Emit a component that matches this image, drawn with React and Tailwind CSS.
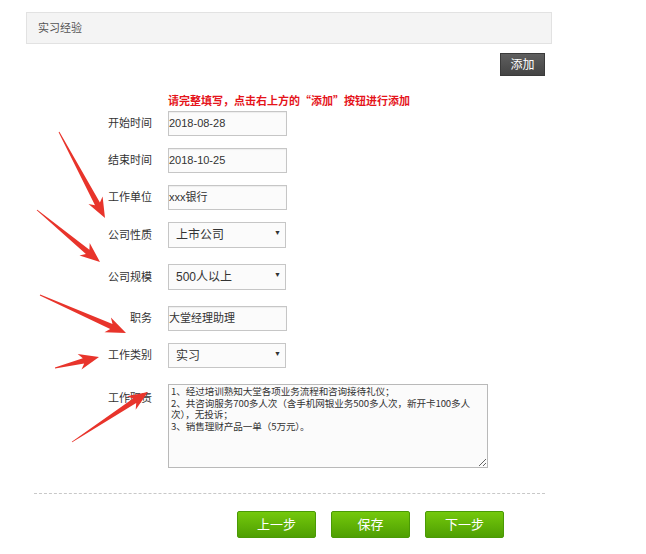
import React from 'react';

const arrows = [
  [59, 132, 105, 218],
  [37, 210, 100, 262],
  [40, 295, 126, 333],
  [55, 368, 99, 357],
  [72, 442, 148, 392],
];

function arrowPoints([x1, y1, x2, y2]) {
  const dx = x2 - x1, dy = y2 - y1;
  const L = Math.hypot(dx, dy);
  const ux = dx / L, uy = dy / L;
  const px = -uy, py = ux;
  const head = 20, barb = 8, shaft = 2.8, tail = 0.4;
  const at = (d, w) => [x1 + ux * d + px * w, y1 + uy * d + py * w];
  const pts = [
    at(0, tail),
    at(L - head + 4, shaft),
    at(L - head, barb),
    [x2, y2],
    at(L - head, -barb),
    at(L - head + 4, -shaft),
    at(0, -tail),
  ];
  return pts.map((p) => p.map((v) => v.toFixed(1)).join(',')).join(' ');
}

function Row({ label, children, className = '' }) {
  return (
    <div className={`flex items-center ${className}`}>
      <div className="w-[152px] text-right text-[11px] text-[#333]">{label}</div>
      <div className="ml-[16px]">{children}</div>
    </div>
  );
}

function TextInput({ value }) {
  return (
    <div className="w-[119px] h-[25px] border border-[#c6c6c6] bg-[#fbfbfb] flex items-center text-[11px] text-[#333] shadow-[inset_0_1px_1px_rgba(0,0,0,0.06)]">
      {value}
    </div>
  );
}

function Select({ value, h = 'h-[26px]' }) {
  return (
    <div className={`w-[118px] ${h} border border-[#c6c6c6] bg-[#fbfbfb] pl-[7px] pr-[4px] flex items-center justify-between text-[12px] text-[#333]`}>
      <span>{value}</span>
      <span className="text-[7px] text-[#333] -mt-[3px]">▼</span>
    </div>
  );
}

const duty = `1、经过培训熟知大堂各项业务流程和咨询接待礼仪；
2、共咨询服务700多人次（含手机网银业务500多人次，新开卡100多人
次），无投诉；
3、销售理财产品一单（5万元）。`;

export default function App() {
  return (
    <div className="relative w-[646px] h-[554px] bg-white overflow-hidden font-['Liberation_Sans','Noto_Sans_CJK_SC',sans-serif]">
      <div className="ml-[26px] mt-[12px] w-[526px] h-[32px] bg-[#f4f4f4] border border-[#e2e2e2] flex items-center pl-[11px] text-[11px] text-[#555]">
        实习经验
      </div>

      <div className="w-[545px] flex justify-end mt-[9px]">
        <button className="w-[45px] h-[23px] bg-gradient-to-b from-[#5f5f5f] to-[#444] border border-[#3a3a3a] text-white text-[12px] leading-none">
          添加
        </button>
      </div>

      <div className="pl-[168px] mt-[16px] text-[11px] leading-[16px] font-bold text-[#e5141b] font-['Noto_Sans_CJK_SC',sans-serif]">
        请完整填写，点击右上方的“添加”按钮进行添加
      </div>

      <div className="mt-[3px] flex flex-col">
        <Row label="开始时间"><TextInput value="2018-08-28" /></Row>
        <Row label="结束时间" className="mt-[12px]"><TextInput value="2018-10-25" /></Row>
        <Row label="工作单位" className="mt-[12px]"><TextInput value="xxx银行" /></Row>
        <Row label="公司性质" className="mt-[12px]"><Select value="上市公司" /></Row>
        <Row label="公司规模" className="mt-[16px]"><Select value="500人以上" /></Row>
        <Row label="职务" className="mt-[16px]"><TextInput value="大堂经理助理" /></Row>
        <Row label="工作类别" className="mt-[12px]"><Select value="实习" h="h-[25px]" /></Row>
        <div className="flex items-start mt-[16px]">
          <div className="w-[152px] text-right text-[11px] text-[#333] pt-[6px]">工作职责</div>
          <textarea
            readOnly
            wrap="off"
            defaultValue={duty}
            className="ml-[16px] w-[320px] h-[84px] border border-[#b9b9b9] bg-[#fbfbfb] px-[2px] pt-[1px] text-[9.6px] leading-[11.5px] tracking-[-0.1px] text-[#333] overflow-hidden resize font-['Noto_Sans_CJK_SC',sans-serif] outline-none"
          />
        </div>
      </div>

      <div className="ml-[34px] mt-[25px] w-[511px] border-t border-dashed border-[#c8c8c8]" />

      <div className="mt-[17px] ml-[237px] flex gap-[15px]">
        {['上一步', '保存', '下一步'].map((t) => (
          <button
            key={t}
            className="w-[79px] h-[27px] rounded-[2px] bg-gradient-to-b from-[#74c90c] to-[#4f9f03] border border-[#4a9a05] text-white text-[13px] leading-none"
          >
            {t}
          </button>
        ))}
      </div>

      <svg className="absolute inset-0 pointer-events-none" width="646" height="554">
        {arrows.map((a, i) => (
          <polygon key={i} points={arrowPoints(a)} fill="#e8342b" />
        ))}
      </svg>
    </div>
  );
}
